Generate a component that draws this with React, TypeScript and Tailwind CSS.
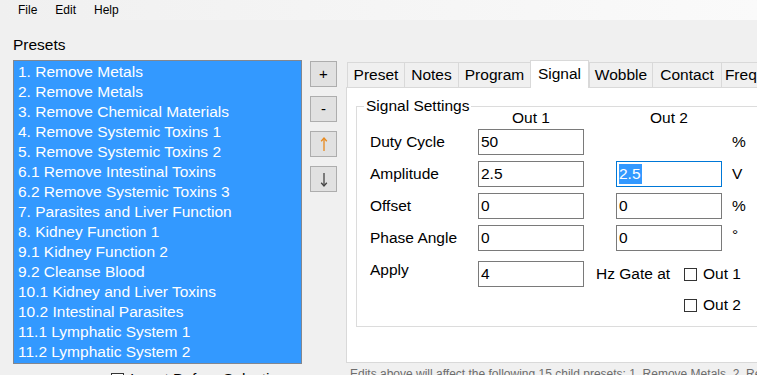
import React from "react";

const presets = [
  "1. Remove Metals",
  "2. Remove Metals",
  "3. Remove Chemical Materials",
  "4. Remove Systemic Toxins 1",
  "5. Remove Systemic Toxins 2",
  "6.1 Remove Intestinal Toxins",
  "6.2 Remove Systemic Toxins 3",
  "7. Parasites and Liver Function",
  "8. Kidney Function 1",
  "9.1 Kidney Function 2",
  "9.2 Cleanse Blood",
  "10.1 Kidney and Liver Toxins",
  "10.2 Intestinal Parasites",
  "11.1 Lymphatic System 1",
  "11.2 Lymphatic System 2",
];

const tabs = [
  { name: "Preset", w: "w-[57px]" },
  { name: "Notes", w: "w-[54px]" },
  { name: "Program", w: "w-[72px]" },
  { name: "Signal", w: "w-[59px]", active: true },
  { name: "Wobble", w: "w-[63px]" },
  { name: "Contact", w: "w-[69px]" },
  { name: "Frequency", w: "w-[80px]" },
];

const Box = ({ value, focused }: { value?: string; focused?: boolean }) => (
  <div
    className={
      "w-[106px] h-[26px] bg-white flex items-center px-[2px] " +
      (focused ? "border border-[#0078d7]" : "border border-[#7a7a7a]")
    }
  >
    {focused ? (
      <span className="bg-[#3399ff] text-white leading-[20px] pr-[1px]">{value}</span>
    ) : (
      <span className="leading-[20px]">{value}</span>
    )}
  </div>
);

const Check = () => <div className="w-[13px] h-[13px] border border-[#333] bg-white shrink-0" />;

const SmallButton = ({ children, color }: { children: React.ReactNode; color: string }) => (
  <div
    className={
      "w-[27px] h-[26px] bg-[#e1e1e1] border border-[#adadad] flex items-center justify-center " +
      color
    }
  >
    {children}
  </div>
);

// thin arrow glyph like the Segoe UI one
const Arrow = ({ up, color }: { up?: boolean; color: string }) => (
  <svg width="8" height="15" viewBox="0 0 8 15" fill="none" stroke={color} strokeWidth="1.3">
    {up ? (
      <>
        <line x1="4" y1="1" x2="4" y2="14" />
        <polyline points="1.2,4.2 4,1 6.8,4.2" />
      </>
    ) : (
      <>
        <line x1="4" y1="1" x2="4" y2="14" />
        <polyline points="1.2,10.8 4,14 6.8,10.8" />
      </>
    )}
  </svg>
);

export default function App() {
  return (
    <div
      className="w-[757px] h-[375px] overflow-hidden bg-[#f0f0f0] text-black"
      style={{ fontFamily: '"Liberation Sans", Arial, sans-serif' }}
    >
      {/* menu */}
      <div className="h-[20px] flex items-center text-[12px] bg-gradient-to-r from-[#f0f0f0] to-[#fafafa]">
        <span className="ml-[18px]">File</span>
        <span className="ml-[18px]">Edit</span>
        <span className="ml-[18px]">Help</span>
      </div>

      <div className="flex">
        {/* presets list */}
        <div className="ml-[13px] w-[289px] shrink-0">
          <div className="h-[40px] pt-[15px] text-[15.5px] leading-[20px]">Presets</div>
          <div className="h-[304px] border border-[#828790] bg-[#3399ff] py-[1px] pl-[4px] text-white text-[15.5px]">
            {presets.map((p, i) => (
              <div key={i} className="h-[20px] leading-[20px] whitespace-nowrap">
                {p}
              </div>
            ))}
          </div>
          <div className="flex items-center mt-[5px] ml-[98px] text-[15.5px] leading-[20px] whitespace-nowrap">
            <Check />
            <span className="ml-[6px]">Insert Before Selection</span>
          </div>
        </div>

        {/* move buttons */}
        <div className="ml-[8px] mt-[41px] flex flex-col gap-[9px] shrink-0">
          <SmallButton color="text-black text-[15px]">+</SmallButton>
          <SmallButton color="text-black text-[15px]">-</SmallButton>
          <SmallButton color="">
            <Arrow up color="#e8891c" />
          </SmallButton>
          <SmallButton color="">
            <Arrow color="#444" />
          </SmallButton>
        </div>

        {/* tab control */}
        <div className="ml-[9px] mt-[40px] w-[440px] shrink-0">
          <div className="flex items-end h-[27px] pl-[1px] text-[15.5px]">
            {tabs.map((t) =>
              t.active ? (
                <div
                  key={t.name}
                  className={
                    t.w +
                    " h-[28px] -mb-px relative z-10 bg-white border-t border-l border-r border-[#d9d9d9] flex justify-center pt-[3px] leading-[20px] shrink-0"
                  }
                >
                  {t.name}
                </div>
              ) : (
                <div
                  key={t.name}
                  className={
                    t.w +
                    " h-[25px] bg-[#f0f0f0] border-t border-l border-[#d9d9d9] flex justify-center items-center leading-[20px] shrink-0 whitespace-nowrap"
                  }
                >
                  {t.name}
                </div>
              )
            )}
          </div>
          <div className="h-[276px] border border-[#d9d9d9] bg-white pt-[18px] pl-[9px]">
            <div className="h-[221px] border border-[#dcdcdc] relative text-[15.5px]">
              <div className="absolute -top-[11px] left-[7px] bg-white px-[2px] leading-[20px]">
                Signal Settings
              </div>
              <div className="pl-[13px] pt-[1px]">
                <div className="flex h-[20px] leading-[20px]">
                  <div className="w-[108px]" />
                  <div className="w-[106px] text-center">Out 1</div>
                  <div className="w-[32px]" />
                  <div className="w-[106px] text-center">Out 2</div>
                </div>

                <div className="flex items-center h-[26px] mt-[1px]">
                  <div className="w-[108px]">Duty Cycle</div>
                  <Box value="50" />
                  <div className="w-[32px]" />
                  <div className="w-[106px]" />
                  <div className="ml-[10px]">%</div>
                </div>

                <div className="flex items-center h-[26px] mt-[6px]">
                  <div className="w-[108px]">Amplitude</div>
                  <Box value="2.5" />
                  <div className="w-[32px]" />
                  <Box value="2.5" focused />
                  <div className="ml-[10px]">V</div>
                </div>

                <div className="flex items-center h-[26px] mt-[6px]">
                  <div className="w-[108px]">Offset</div>
                  <Box value="0" />
                  <div className="w-[32px]" />
                  <Box value="0" />
                  <div className="ml-[10px]">%</div>
                </div>

                <div className="flex items-center h-[26px] mt-[6px]">
                  <div className="w-[108px]">Phase Angle</div>
                  <Box value="0" />
                  <div className="w-[32px]" />
                  <Box value="0" />
                  <div className="ml-[10px] self-start leading-[20px]">°</div>
                </div>

                <div className="flex h-[26px] mt-[10px]">
                  <div className="w-[108px] leading-[18px]">Apply</div>
                  <Box value="4" />
                  <div className="ml-[12px] w-[88px] self-center whitespace-nowrap">Hz Gate at</div>
                  <div className="flex items-center self-center">
                    <Check />
                    <span className="ml-[6px]">Out 1</span>
                  </div>
                </div>

                <div className="flex items-center h-[20px] mt-[8px] ml-[314px]">
                  <Check />
                  <span className="ml-[6px]">Out 2</span>
                </div>
              </div>
            </div>
          </div>
          <div className="mt-[3px] ml-[4px] text-[12px] text-[#6d6d6d] whitespace-nowrap leading-[16px]">
            Edits above will affect the following 15 child presets: 1. Remove Metals, 2. Remove Metals, 3. Remove Chemical Materials
          </div>
        </div>
      </div>
    </div>
  );
}
